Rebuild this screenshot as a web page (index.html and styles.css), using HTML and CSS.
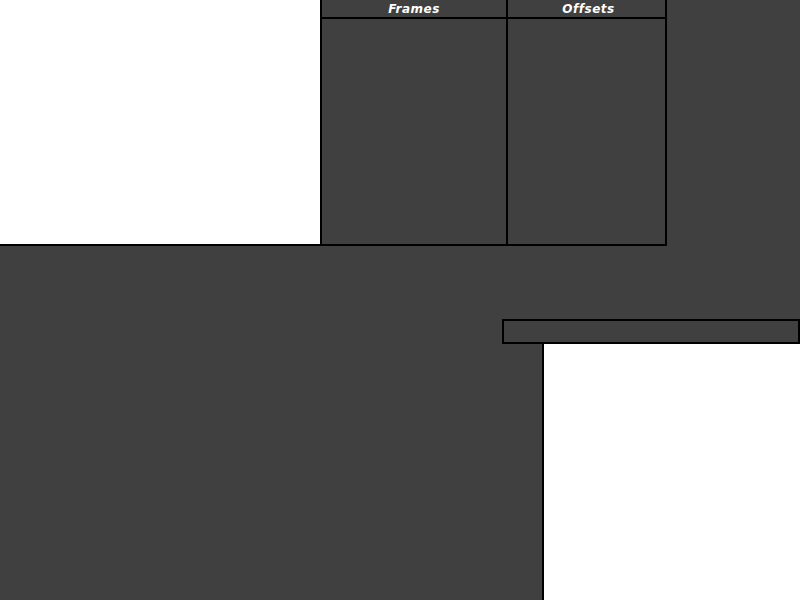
FILE: index.html
```html
<!DOCTYPE html>
<html>
  <head>
    <title>Sprite Editor</title>
    <link rel="stylesheet" href="styles.css">
  </head>
  <body>
    <div class="editor">
      <div class="top-row">
        <div class="preview"></div>
        <div class="list-panel">
          <div class="list-column frames">
            <div class="list-header">Frames</div>
            <div class="list-body"></div>
          </div>
          <div class="list-column offsets">
            <div class="list-header">Offsets</div>
            <div class="list-body"></div>
          </div>
        </div>
      </div>
      <div class="bottom-area">
        <div class="input-bar"></div>
        <div class="sheet-view"></div>
      </div>
    </div>
  </body>
</html>
```

FILE: styles.css
```css
html, body {
  margin: 0;
  padding: 0;
}
body {
  background: #404040;
  color: white;
  font-family: 'DejaVu Sans', sans-serif;
  overflow: hidden;
}
.editor {
  width: 800px;
  height: 600px;
  display: flex;
  flex-direction: column;
}
.top-row {
  display: flex;
  height: 246px;
}
.preview {
  width: 320px;
  height: 244px;
  background: white;
  border-bottom: 2px solid black;
}
.list-panel {
  display: flex;
  width: 343px;
  border: 2px solid black;
  border-top: none;
}
.list-column {
  display: flex;
  flex-direction: column;
}
.list-column.frames {
  width: 184px;
  border-right: 2px solid black;
}
.list-column.offsets {
  width: 157px;
}
.list-header {
  height: 16px;
  padding-top: 1px;
  line-height: 17px;
  overflow: hidden;
  border-bottom: 2px solid black;
  text-align: center;
  font-size: 12px;
  font-weight: bold;
  font-style: italic;
  letter-spacing: 0.5px;
  -webkit-font-smoothing: none;
}
.list-column.offsets .list-header {
  padding-left: 4px;
}
.list-body {
  flex: 1;
}
.bottom-area {
  flex: 1;
  display: flex;
  flex-direction: column;
  padding-top: 73px;
}
.input-bar {
  margin-left: 502px;
  width: 294px;
  height: 21px;
  border: 2px solid black;
}
.sheet-view {
  flex: 1;
  margin-left: 542px;
  background: white;
  border-left: 2px solid black;
}
```
